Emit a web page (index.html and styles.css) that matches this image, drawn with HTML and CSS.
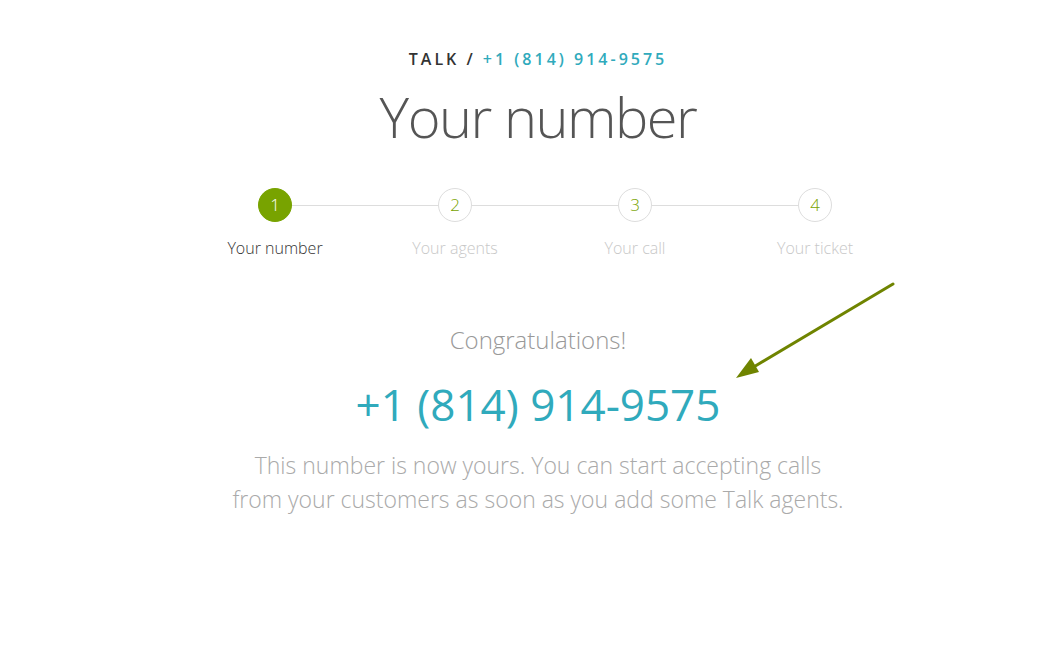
FILE: index.html
```html
<!DOCTYPE html>
<html>
<head>
<meta charset="utf-8">
<link rel="stylesheet" href="styles.css">
</head>
<body>
<div class="page">
  <div class="crumb"><span class="crumb-talk">TALK /</span> <span class="crumb-num">+1 (814) 914-9575</span></div>
  <h1 class="title">Your number</h1>
  <div class="stepper">
    <div class="step active"><div class="circle">1</div><div class="label">Your number</div></div>
    <div class="step"><div class="circle">2</div><div class="label">Your agents</div></div>
    <div class="step"><div class="circle">3</div><div class="label">Your call</div></div>
    <div class="step last"><div class="circle">4</div><div class="label">Your ticket</div></div>
  </div>
  <div class="congrats">Congratulations!</div>
  <div class="phone">+1 (814) 914-9575</div>
  <p class="desc">This number is now yours. You can start accepting calls<br>from your customers as soon as you add some Talk agents.</p>
</div>
<svg class="arrow" width="1044" height="672" viewBox="0 0 1044 672">
  <line x1="893" y1="284" x2="752" y2="368" stroke="#6f8400" stroke-width="3" stroke-linecap="round"/>
  <polygon points="736,378 751,358 759,372" fill="#6f8400"/>
</svg>
</body>
</html>
```
FILE: styles.css
```css
html, body { margin: 0; padding: 0; background: #fff; }
body { font-family: "Open Sans", "Noto Sans", sans-serif; }
.page {
  width: 720px;
  margin-left: 178px;
  padding-top: 48px;
  text-align: center;
}
.crumb {
  font-size: 16px;
  font-weight: 600;
  letter-spacing: 3px;
  line-height: 22px;
}
.crumb-talk { color: #333; }
.crumb-num { color: #30aabc; }
.title {
  margin: 10px 0 0;
  font-size: 56px;
  font-weight: 300;
  color: #555;
  line-height: 72px;
  letter-spacing: -1.5px;
}
.stepper {
  display: flex;
  margin: 36px 0 0 7px;
}
.step {
  flex: 0 0 180px;
  position: relative;
  display: flex;
  flex-direction: column;
  align-items: center;
}
.step::after {
  content: "";
  position: absolute;
  left: 107px;
  width: 146px;
  top: 17px;
  height: 1px;
  background: #ddd;
}
.step.last::after { display: none; }
.circle {
  width: 32px;
  height: 32px;
  border: 1px solid #ddd;
  border-radius: 50%;
  background: #fff;
  color: #78a300;
  font-size: 17px;
  line-height: 32px;
  font-weight: 300;
}
.step.active .circle {
  background: #78a300;
  border-color: #78a300;
  color: #fff;
}
.label {
  margin-top: 15px;
  font-size: 16px;
  font-weight: 300;
  color: #c8c8c8;
  line-height: 22px;
}
.step.active .label { color: #333; }
.congrats {
  margin-top: 65px;
  font-size: 24px;
  font-weight: 300;
  color: #999;
  line-height: 32px;
}
.phone {
  margin-top: 20px;
  font-size: 44px;
  font-weight: 400;
  color: #30aabc;
  line-height: 56px;
}
.desc {
  margin: 16px 0 0;
  font-size: 23px;
  font-weight: 300;
  color: #aaa;
  line-height: 34px;
}
.arrow { position: absolute; left: 0; top: 0; pointer-events: none; }
```
